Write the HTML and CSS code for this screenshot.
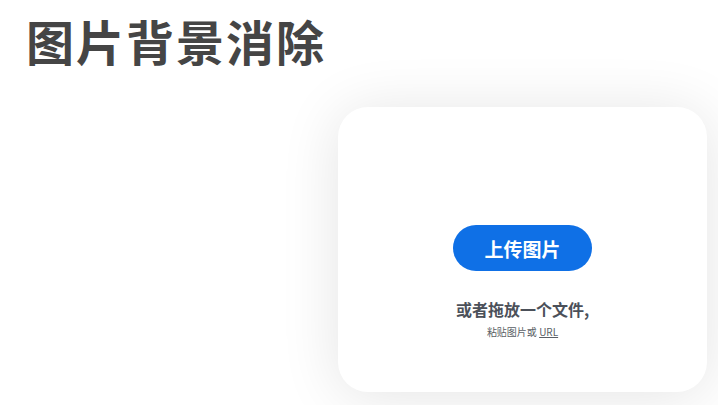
FILE: index.html
```html
<!DOCTYPE html>
<html>
<head>
<meta charset="utf-8"/>
<title>图片背景消除</title>
<link rel="stylesheet" href="styles.css">
</head>
<body>
<div class="page">
  <h1 class="title">图片背景消除</h1>
  <div class="stage">
    <div class="card">
      <button class="upload">上传图片</button>
      <p class="drop">或者拖放一个文件,</p>
      <p class="paste">粘贴图片或 <a href="#">URL</a></p>
    </div>
  </div>
</div>
</body>
</html>
```
FILE: styles.css
```css
body {
   margin: 0;
   background-color: white;
   font-family: "Noto Sans CJK SC", "Noto Sans", sans-serif;
}

.page {
   width: 718px;
   height: 405px;
   overflow: hidden;
}

.title {
   margin: 0;
   padding: 6px 0 0 26px;
   font-size: 48px;
   line-height: 68px;
   font-weight: 700;
   color: #454545;
   letter-spacing: 2px;
}

.stage {
   display: flex;
   justify-content: flex-end;
   padding: 33px 11px 0 0;
}

.card {
   width: 369px;
   height: 285px;
   box-sizing: border-box;
   background: white;
   border-radius: 30px;
   box-shadow: 0 4px 60px rgba(0, 0, 0, 0.11);
   display: flex;
   flex-direction: column;
   align-items: center;
   padding-top: 118px;
}

.upload {
   width: 139px;
   height: 46px;
   border: none;
   border-radius: 23px;
   background: #0f70e6;
   color: white;
   font-family: inherit;
   font-size: 19px;
   font-weight: 700;
}

.drop {
   margin: 27px 0 0;
   font-size: 16px;
   line-height: 22px;
   font-weight: 700;
   color: #4b5059;
}

.paste {
   margin: 5px 0 0;
   font-size: 10px;
   line-height: 14px;
   color: #5a5f66;
}

.paste a {
   color: #5a5f66;
}
```
